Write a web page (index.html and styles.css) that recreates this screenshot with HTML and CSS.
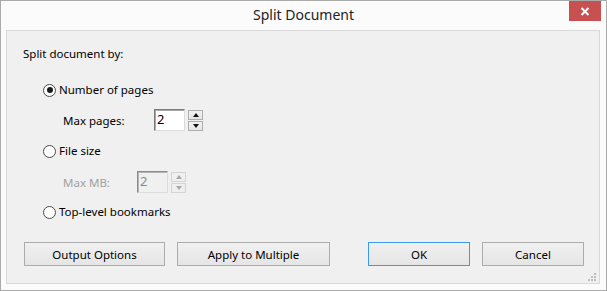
FILE: index.html
```html
<!DOCTYPE html>
<html>
<head>
<meta charset="utf-8">
<link rel="stylesheet" href="styles.css">
</head>
<body>
<div class="window">
  <div class="titlebar">
    <div></div>
    <div class="title">Split Document</div>
    <div class="close"><svg width="10" height="9" viewBox="0 0 10 9"><path d="M1.5 1 L8.5 8 M8.5 1 L1.5 8" stroke="#fff" stroke-width="2" fill="none"/></svg></div>
  </div>
  <div class="panel">
    <div class="heading">Split document by:</div>
    <div class="radio-row r1"><span class="radio checked"></span><span>Number of pages</span></div>
    <div class="field-row f1">
      <span class="flabel lp">Max pages:</span>
      <span class="input">2</span>
      <span class="spin"><span class="sb"><i class="up"></i></span><span class="sb"><i class="down"></i></span></span>
    </div>
    <div class="radio-row r2"><span class="radio"></span><span>File size</span></div>
    <div class="field-row f2 disabled">
      <span class="flabel lm">Max MB:</span>
      <span class="input">2</span>
      <span class="spin"><span class="sb"><i class="up"></i></span><span class="sb"><i class="down"></i></span></span>
    </div>
    <div class="radio-row r3"><span class="radio"></span><span>Top-level bookmarks</span></div>
    <div class="buttons">
      <span class="btn b-out">Output Options</span>
      <span class="btn b-apply">Apply to Multiple</span>
      <span class="btn b-ok default">OK</span>
      <span class="btn b-cancel">Cancel</span>
    </div>
    <svg class="grip" width="8" height="8" viewBox="0 0 8 8">
      <rect x="6" y="0" width="2" height="2" fill="#bdbdbd"/>
      <rect x="3" y="3" width="2" height="2" fill="#bdbdbd"/>
      <rect x="6" y="3" width="2" height="2" fill="#bdbdbd"/>
      <rect x="0" y="6" width="2" height="2" fill="#bdbdbd"/>
      <rect x="3" y="6" width="2" height="2" fill="#bdbdbd"/>
      <rect x="6" y="6" width="2" height="2" fill="#bdbdbd"/>
    </svg>
  </div>
</div>
</body>
</html>
```
FILE: styles.css
```css
html, body {
  margin: 0;
  padding: 0;
  background: #fbfbfb;
}
body {
  font-family: "Segoe UI", "Noto Sans", "Open Sans", sans-serif;
  font-size: 11.5px;
  color: #000;
}
.window {
  width: 607px;
  height: 291px;
  box-sizing: border-box;
  border: 1px solid #aaaaaa;
  background: #fbfbfb;
  display: flex;
  flex-direction: column;
}
.titlebar {
  height: 29px;
  display: grid;
  grid-template-columns: 1fr auto 1fr;
}
.title {
  font-size: 14px;
  line-height: 29px;
  color: #222;
  padding-top: 0px;
  margin-top: -1px;
}
.close {
  justify-self: end;
  align-self: start;
  width: 32px;
  height: 20px;
  margin-right: 5px;
  background: #c75050;
  display: flex;
  align-items: center;
  justify-content: center;
}
.close svg { display: block; }
.panel {
  position: relative;
  margin: 0 6px 6px 5px;
  height: 254px;
  box-sizing: border-box;
  border: 1px solid #d9d9d9;
  background: #f0f0f0;
  padding: 15px 15px 0 16px;
  display: flex;
  flex-direction: column;
}
.heading {
  height: 16px;
  line-height: 16px;
}
.radio-row {
  height: 16px;
  display: flex;
  align-items: center;
  margin-left: 20px;
  line-height: 16px;
}
.r1 { margin-top: 20px; }
.r2 { margin-top: 12px; }
.r3 { margin-top: 11px; }
.radio {
  width: 13px;
  height: 13px;
  box-sizing: border-box;
  border-radius: 50%;
  border: 1px solid #4a4a4a;
  background: #fff;
  margin-right: 3px;
  position: relative;
  flex: none;
}
.radio.checked::after {
  content: "";
  position: absolute;
  left: 2.5px;
  top: 2.5px;
  width: 6px;
  height: 6px;
  border-radius: 50%;
  background: #1a1a1a;
}
.field-row {
  height: 22px;
  display: flex;
  align-items: center;
  margin-left: 40px;
}
.f1 { margin-top: 11px; }
.f2 { margin-top: 12px; }
.flabel { display: block; }
.lp { width: 91px; }
.lm { width: 74px; }
.input {
  width: 31px;
  height: 22px;
  box-sizing: border-box;
  border: 1px solid;
  border-color: #7a7a7a #dcdcdc #dcdcdc #7a7a7a;
  box-shadow: inset 1px 1px 0 #a8a8a8;
  background: #fff;
  padding-left: 2px;
  font-size: 13px;
  line-height: 19px;
}
.spin {
  margin-left: 3px;
  height: 21px;
  align-self: flex-end;
  display: flex;
  flex-direction: column;
  justify-content: space-between;
}
.sb {
  width: 15px;
  height: 10px;
  box-sizing: border-box;
  border: 1px solid #adadad;
  background: linear-gradient(#f2f2f2, #e6e6e6);
  display: flex;
  align-items: center;
  justify-content: center;
}
.sb i {
  width: 0;
  height: 0;
  border-left: 3.5px solid transparent;
  border-right: 3.5px solid transparent;
}
.sb .up { border-bottom: 4px solid #111; }
.sb .down { border-top: 4px solid #111; }
.disabled { color: #a0a0a0; }
.disabled .input {
  background: #f0f0f0;
  color: #8a8a8a;
  border-color: #8c8c8c #dcdcdc #dcdcdc #8c8c8c;
  box-shadow: inset 1px 1px 0 #b5b5b5;
}
.disabled .sb {
  border-color: #d4d4d4;
  background: #efefef;
}
.disabled .sb .up { border-bottom-color: #a8a8a8; }
.disabled .sb .down { border-top-color: #a8a8a8; }
.buttons {
  margin-top: 22px;
  margin-left: 1px;
  display: flex;
  align-items: center;
}
.btn {
  height: 24px;
  box-sizing: border-box;
  border: 1px solid #acacac;
  background: linear-gradient(#f0f0f0, #e5e5e5);
  display: flex;
  align-items: center;
  justify-content: center;
}
.btn.default { border-color: #3c99f0; }
.b-out { width: 141px; }
.b-apply { width: 153px; margin-left: 12px; }
.b-ok { width: 102px; margin-left: auto; }
.b-cancel { width: 102px; margin-left: 12px; }
.grip {
  position: absolute;
  right: 3px;
  bottom: 2px;
}
```
